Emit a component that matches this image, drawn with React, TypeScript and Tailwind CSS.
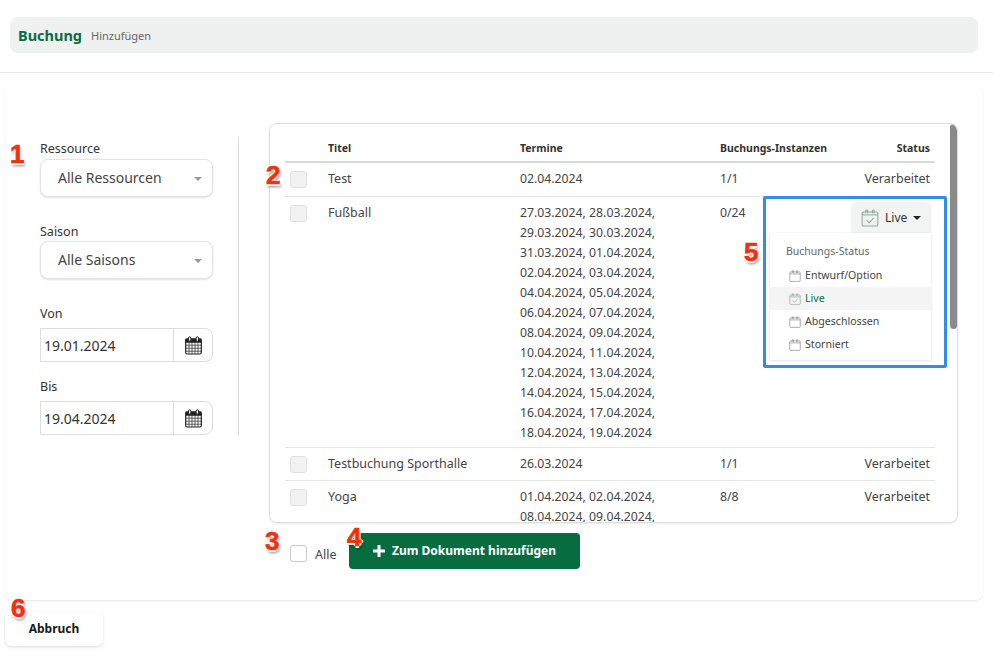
const fontStack = 'font-["Noto_Sans",sans-serif]'

function GridCalendar() {
  return (
    <svg width="17" height="19" viewBox="0 0 17 19" fill="none" stroke="#222" strokeWidth="1">
      <rect x="0.7" y="3" width="15.6" height="15" rx="1.5" fill="#fff" strokeWidth="1.2" />
      <rect x="1" y="3" width="15" height="3.2" fill="#222" />
      <path d="M1 9.200h15M1 12.200h15M1 15.200h15M4 6v12M7 6v12M10 6v12M13 6v12" strokeWidth="0.7" />
      <rect x="3.500" y="0.800" width="2.400" height="4.400" rx="1.200" fill="#fff" strokeWidth="1" />
      <rect x="11.100" y="0.800" width="2.400" height="4.400" rx="1.200" fill="#fff" strokeWidth="1" />
    </svg>
  )
}

function StatusCalendar({ size, color, checked, fill }: { size: number; color: string; checked?: boolean; fill?: string }) {
  return (
    <svg width={size} height={size} viewBox="0 0 16 16" fill="none" stroke={color} strokeWidth="0.9">
      <rect x="1" y="2.600" width="14" height="12.600" rx="1.200" fill={fill ?? 'none'} />
      <path d="M1 5.200h14" />
      <path d="M4.300 3.800V1.600a.8.8 0 0 1 1.600 0v2.200M10.100 3.800V1.600a.8.8 0 0 1 1.600 0v2.200" />
      {checked && <path d="M5 10l2.200 2.200L11.400 8" />}
    </svg>
  )
}

function SelectBox({ label }: { label: string }) {
  return (
    <div className="flex h-[38px] w-[173px] items-center justify-between rounded-lg border border-[#e2e4e3] bg-white pl-[17px] pr-[10px] shadow-[0_1px_2px_rgba(0,0,0,0.12)]">
      <span className="mb-[2px] text-[14px] text-[#444]">{label}</span>
      <span className="mt-[1px] h-0 w-0 border-x-[4px] border-t-[4px] border-x-transparent border-t-[#999]" />
    </div>
  )
}

function DateBox({ value }: { value: string }) {
  return (
    <div className="flex h-[34px] w-[173px] rounded-r-lg border border-[#dcdedd] bg-white">
      <div className="flex flex-1 items-center pl-[3px] text-[14px] text-[#333]">{value}</div>
      <div className="flex w-[39px] items-center justify-center border-l border-[#dcdedd]">
        <GridCalendar />
      </div>
    </div>
  )
}

function RowCheck() {
  return <div className="mt-[2.5px] h-[17px] w-[17px] rounded-[3px] border border-[#dfe1e0] bg-[#f1f2f1]" />
}

const fussballDates = [
  '27.03.2024, 28.03.2024,',
  '29.03.2024, 30.03.2024,',
  '31.03.2024, 01.04.2024,',
  '02.04.2024, 03.04.2024,',
  '04.04.2024, 05.04.2024,',
  '06.04.2024, 07.04.2024,',
  '08.04.2024, 09.04.2024,',
  '10.04.2024, 11.04.2024,',
  '12.04.2024, 13.04.2024,',
  '14.04.2024, 15.04.2024,',
  '16.04.2024, 17.04.2024,',
  '18.04.2024, 19.04.2024',
]

const rowGrid = 'grid grid-cols-[38px_192px_200px_1fr] border-b border-[#e3e5e4] pl-[5px] pr-[5px] text-[12.25px] leading-[20px] text-[#444]'

function Row({ title, dates, count, status, h }: { title: string; dates: string[]; count: string; status?: string; h: string }) {
  return (
    <div className={`${rowGrid} ${h}`}>
      <RowCheck />
      <div className="pt-[1px] text-[12.5px]">{title}</div>
      <div className="pt-[1px]">
        {dates.map((d) => (
          <div key={d}>{d}</div>
        ))}
      </div>
      <div className="flex justify-between pt-[1px]">
        <span>{count}</span>
        {status && <span className="text-[12.5px]">{status}</span>}
      </div>
    </div>
  )
}

const marker = 'absolute text-[26px] leading-none font-["Liberation_Sans",sans-serif] font-bold text-[#f2300f] [-webkit-text-stroke:0.7px_#f2300f] [text-shadow:1.5px_0_0_#fff,-1.5px_0_0_#fff,0_1.5px_0_#fff,0_-1.5px_0_#fff,1px_3px_3px_rgba(0,0,0,0.45)]'

const statusItems = ['Entwurf/Option', 'Live', 'Abgeschlossen', 'Storniert']

export default function App() {
  return (
    <div className={`relative h-[653px] w-[993px] overflow-hidden bg-white ${fontStack}`}>
      <div className="h-[73px] border-b border-[#e4e6e5] px-[10px] pt-[17px]">
        <div className="flex h-[36px] w-[968px] items-center gap-[9px] rounded-lg bg-[#eef1f0] pl-[8px]">
          <span className="pt-[1px] text-[14.5px] font-bold text-[#0a6b43]">Buchung</span>
          <span className="pt-[3px] text-[11px] text-[#666]">Hinzufügen</span>
        </div>
      </div>

      <div className="mx-[5px] mt-[12px] flex h-[515px] w-[978px] rounded-lg pl-[35px] shadow-[0_1px_2px_rgba(0,0,0,0.1)]">
        <div className="mt-[52px] h-[298px] w-[199px] border-r border-[#dcdedd] text-[12.5px] text-[#333]">
          <div className="h-[22px] pt-[3px] leading-[18px]">Ressource</div>
          <SelectBox label="Alle Ressourcen" />
          <div className="mt-[26px] h-[18px] leading-[18px]">Saison</div>
          <SelectBox label="Alle Saisons" />
          <div className="mt-[26px] h-[23px] leading-[18px]">Von</div>
          <DateBox value="19.01.2024" />
          <div className="mt-[16px] h-[23px] leading-[18px]">Bis</div>
          <DateBox value="19.04.2024" />
        </div>

        <div className="ml-[30px] mt-[38px] w-[689px]">
          <div className="relative h-[400px] overflow-hidden rounded-lg border border-[#dcdedd] pl-[15px] pr-[22px] shadow-[0_1px_2px_rgba(0,0,0,0.08)]">
            <div className="grid h-[39px] grid-cols-[38px_192px_200px_1fr] items-end border-b-2 border-[#d8dad9] pb-[4px] pl-[5px] pr-[5px] text-[10.5px] font-bold text-[#333]">
              <span />
              <span>Titel</span>
              <span>Termine</span>
              <span className="flex justify-between">
                <span>Buchungs-Instanzen</span>
                <span>Status</span>
              </span>
            </div>
            <div className="pt-[5px]">
              <Row title="Test" dates={['02.04.2024']} count="1/1" status="Verarbeitet" h="h-[29px]" />
            </div>
            <div className="pt-[5px]">
              <Row title="Fußball" dates={fussballDates} count="0/24" h="h-[246px]" />
            </div>
            <div className="pt-[5px]">
              <Row title="Testbuchung Sporthalle" dates={['26.03.2024']} count="1/1" status="Verarbeitet" h="h-[28px]" />
            </div>
            <div className="pt-[5px]">
              <Row title="Yoga" dates={['01.04.2024, 02.04.2024,', '08.04.2024, 09.04.2024,']} count="8/8" status="Verarbeitet" h="h-[60px]" />
            </div>
            <div className="absolute right-0 top-0 h-[205px] w-[7px] rounded-full bg-[#8a8a8a]" />
          </div>

          <div className="mt-[10px] flex pl-[21px]">
            <div className="mt-[12px] h-[17px] w-[17px] shrink-0 rounded-[3px] border border-[#c9cbca] bg-white" />
            <span className="ml-[8px] mt-[13px] w-[23px] text-[12.5px] leading-[18px] text-[#444]">Alle</span>
            <button type="button" className="ml-[11px] flex h-[36px] w-[231px] items-center gap-[6px] rounded-[4px] bg-[#076d40] pl-[23px] text-[12px] font-bold text-white">
              <svg width="14" height="14" viewBox="0 0 14 14" fill="#fff">
                <path d="M5.500 1h3v4.500H13v3H8.500V13h-3V8.500H1v-3h4.500z" />
              </svg>
              Zum Dokument hinzufügen
            </button>
          </div>
        </div>
      </div>

      <button type="button" className="ml-[5px] mt-[12px] h-[34px] w-[98px] rounded-md bg-white text-[12px] font-bold text-[#1a1a1a] shadow-[0_1px_3px_rgba(0,0,0,0.15)]">
        Abbruch
      </button>

      <div className="absolute left-[763px] top-[196px] h-[172px] w-[184px] rounded-[2px] border-[3px] border-[#2f8fe8] bg-white">
        <div className="absolute left-[85px] top-[3px] flex h-[31px] w-[80px] items-center rounded-t-md bg-[#f2f4f3] pl-[10px] shadow-[0_1px_2px_rgba(0,0,0,0.1)]">
          <StatusCalendar size={18} color="#8fa89c" checked fill="#eef3f0" />
          <span className="ml-[6px] pt-[1px] text-[12px] text-[#333]">Live</span>
          <span className="ml-[6px] h-0 w-0 border-x-[4px] border-t-[4px] border-x-transparent border-t-[#222]" />
        </div>
        <div className="absolute left-[4px] top-[34px] h-[127px] w-[161px] bg-white pt-[9px] shadow-[0_1px_3px_rgba(0,0,0,0.12)]">
          <div className="pl-[16px] text-[10.5px] leading-[18px] text-[#666]">Buchungs-Status</div>
          <div className="mt-[4px]">
            {statusItems.map((item) => {
              const live = item === 'Live'
              return (
                <div key={item} className={`flex h-[23px] items-center gap-[4px] pl-[19px] text-[10.6px] ${live ? 'bg-[#f3f4f3] text-[#0a6b43]' : 'text-[#444]'}`}>
                  <StatusCalendar size={12} color={live ? '#8fa89c' : '#888'} checked={live} />
                  <span>{item}</span>
                </div>
              )
            })}
          </div>
        </div>
      </div>

      <span className={`${marker} left-[10px] top-[141px]`}>1</span>
      <span className={`${marker} left-[266px] top-[162px]`}>2</span>
      <span className={`${marker} left-[265px] top-[528px]`}>3</span>
      <span className={`${marker} left-[347px] top-[524px]`}>4</span>
      <span className={`${marker} left-[744px] top-[239px]`}>5</span>
      <span className={`${marker} left-[11px] top-[595px]`}>6</span>
    </div>
  )
}
